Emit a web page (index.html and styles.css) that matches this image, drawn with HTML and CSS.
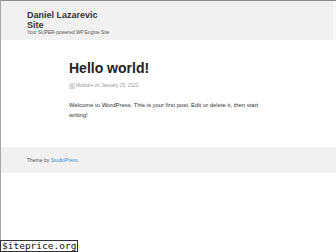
FILE: index.html
```html
<!DOCTYPE html>
<html lang="en">
<head>
  <meta charset="UTF-8">
  <meta name="viewport" content="width=device-width, initial-scale=1.0">
  <title>Daniel Lazarevic Site</title>
  <link rel="stylesheet" href="styles.css">
</head>
<body>

  <div class="site">
    <!-- Header -->
    <header class="site-header">
      <h1 class="site-title">Daniel Lazarevic<br>Site</h1>
      <p class="site-description">Your SUPER-powered WP Engine Site</p>
    </header>

    <!-- Post -->
    <main class="content">
      <h2 class="entry-title">Hello world!</h2>
      <p class="entry-meta">
        <svg class="avatar" width="6" height="6" viewBox="0 0 12 12">
          <rect x="0.5" y="0.5" width="11" height="11" rx="2" fill="#f4f4f4" stroke="#b5b5b5"/>
          <circle cx="6" cy="5" r="2.3" fill="none" stroke="#aaa" stroke-width="1.2"/>
          <path d="M2 11.5c0.6-2.4 2.2-3.4 4-3.4s3.4 1 4 3.4" fill="none" stroke="#aaa" stroke-width="1.2"/>
        </svg>
        Mdstore on January 25, 2022
      </p>
      <p class="entry-content">Welcome to WordPress. This is your first post. Edit or delete it, then start writing!</p>
    </main>

    <!-- Footer -->
    <footer class="site-footer">
      <p>Theme by <a href="#">StudioPress</a>.</p>
    </footer>
  </div>

  <div class="watermark">$iteprice.org</div>

</body>
</html>
```

FILE: styles.css
```css
body {
  font-family: "Liberation Sans", Arial, sans-serif;
  background: #fff;
  color: #333;
  margin: 0;
}

.site {
  border-top: 1px solid #8a8a8a;
  border-left: 1px solid #a8a8a8;
  min-height: 251px;
  box-sizing: border-box;
}

.site-header {
  background: #f1f1f1;
  height: 39px;
  box-sizing: border-box;
  padding: 9px 0 0 26px;
  border-right: 3px solid #f8f8f8;
}

.site-title {
  font-size: 9px;
  line-height: 10px;
  font-weight: bold;
  color: #333;
  margin: 0;
}

.site-description {
  font-size: 4.8px;
  line-height: 6px;
  color: #555;
  margin: 0;
}

.content {
  padding-left: 68px;
  width: 207px;
}

.entry-title {
  font-size: 14px;
  line-height: 16px;
  font-weight: bold;
  color: #222;
  margin: 20px 0 0;
}

.entry-meta {
  font-size: 4.8px;
  line-height: 8px;
  color: #999;
  margin: 6px 0 0;
  display: flex;
  align-items: center;
  gap: 1px;
}

.avatar {
  flex-shrink: 0;
}

.entry-content {
  font-size: 5.9px;
  line-height: 10px;
  color: #333;
  margin: 10px 0 0;
}

.site-footer {
  background: #f1f1f1;
  height: 26px;
  margin-top: 27px;
  padding-left: 26px;
  display: flex;
  align-items: center;
}

.site-footer p {
  font-size: 5px;
  color: #555;
  margin: 0;
}

.site-footer a {
  color: #3a8fd0;
  text-decoration: none;
}

.watermark {
  position: absolute;
  left: 0;
  bottom: 0;
  background: #fff;
  border: 1px solid #333;
  font-family: "DejaVu Sans Mono", monospace;
  font-size: 9.5px;
  line-height: 10px;
  padding: 0 1px;
  color: #111;
}
```
